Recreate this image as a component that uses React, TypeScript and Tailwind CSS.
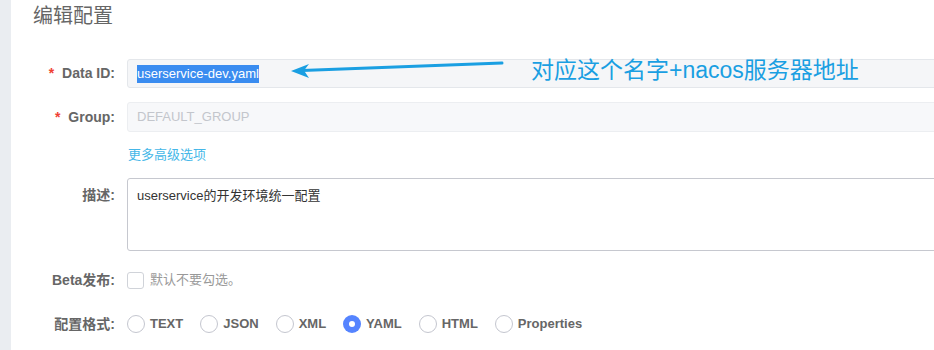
const font = { fontFamily: '"Liberation Sans", "Noto Sans CJK SC", sans-serif' };

const formats = ['TEXT', 'JSON', 'XML', 'YAML', 'HTML', 'Properties'];

function Label({ text, required }: { text: string; required?: boolean }) {
  return (
    <div className="w-[104px] shrink-0 text-right text-[14px] font-bold text-[#666]">
      {required && <span className="mr-[8px] text-[#f04134]">*</span>}
      {text}
    </div>
  );
}

export default function App() {
  return (
    <div
      className="relative flex h-[350px] w-[934px] overflow-hidden bg-white text-[13px]"
      style={font}
    >
      {/* left gutter */}
      <div className="w-[11px] shrink-0 bg-[#eaedf1]"></div>

      <div className="flex-1">
        {/* Title */}
        <div className="h-[32px] pl-[22px] text-[20px] leading-[32px] text-[#666]">编辑配置</div>

        {/* Data ID */}
        <div className="mt-[27px] flex h-[29px] items-center">
          <Label text="Data ID:" required />
          <div className="ml-[12px] flex h-[29px] w-[820px] shrink-0 items-center rounded-[3px] border border-[#e4e7eb] bg-[#f5f6f8] pl-[9px]">
            <span className="bg-[#3a8cf0] leading-[18px] text-white">userservice-dev.yaml</span>
          </div>
        </div>

        {/* Group */}
        <div className="mt-[14px] flex h-[30px] items-center">
          <Label text="Group:" required />
          <div className="ml-[12px] flex h-[30px] w-[820px] shrink-0 items-center rounded-[3px] border border-[#eceef1] bg-[#f7f8fa] pl-[9px] text-[#c3c6cc]">
            DEFAULT_GROUP
          </div>
        </div>

        {/* Advanced */}
        <div className="mt-[15px] flex h-[16px] items-center">
          <div className="w-[104px] shrink-0"></div>
          <a className="ml-[13px] text-[#45b7e8]">更多高级选项</a>
        </div>

        {/* Description */}
        <div className="mt-[15px] flex items-start">
          <div className="pt-[7px]">
            <Label text="描述:" />
          </div>
          <div className="ml-[12px] h-[73px] w-[820px] shrink-0 rounded-[3px] border border-[#c6c8cf] bg-white pl-[9px] pt-[7px] text-[#333]">
            userservice的开发环境统一配置
          </div>
        </div>

        {/* Beta */}
        <div className="mt-[19px] flex h-[20px] items-center">
          <Label text="Beta发布:" />
          <div className="ml-[12px] h-[17px] w-[17px] shrink-0 rounded-[3px] border border-[#d0d3d9] bg-white"></div>
          <span className="ml-[6px] text-[#999]">默认不要勾选。</span>
        </div>

        {/* Format */}
        <div className="mt-[24px] flex h-[20px] items-center">
          <Label text="配置格式:" />
          <div className="ml-[12px] flex items-center">
            {formats.map((f) => (
              <div key={f} className="mr-[17px] flex items-center">
                {f === 'YAML' ? (
                  <span className="flex h-[18px] w-[18px] items-center justify-center rounded-full bg-[#5584ff]">
                    <span className="h-[6px] w-[6px] rounded-full bg-white"></span>
                  </span>
                ) : (
                  <span className="h-[18px] w-[18px] rounded-full border border-[#c4c6cf] bg-white"></span>
                )}
                <span className="ml-[5px] font-bold text-[#666]">{f}</span>
              </div>
            ))}
          </div>
        </div>
      </div>

      {/* annotation */}
      <svg className="pointer-events-none absolute left-0 top-0" width="934" height="350">
        <path d="M502 63 L302 70.5" stroke="#1a9fe2" strokeWidth="3" strokeLinecap="round" fill="none" />
        <path d="M291 71 L309 64 L304 70.6 L309 78 Z" fill="#1a9fe2" />
      </svg>
      <div className="pointer-events-none absolute left-[531px] top-[58px] text-[23px] leading-[25px] text-[#1a9fe2]">
        对应这个名字+nacos服务器地址
      </div>
    </div>
  );
}
